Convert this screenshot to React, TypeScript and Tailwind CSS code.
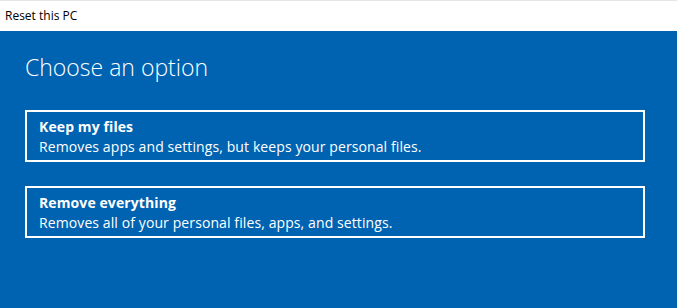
export default function App() {
  return (
    <div className="w-[677px] h-[308px] flex flex-col bg-[#0063b1]" style={{ fontFamily: '"Open Sans", "Noto Sans", sans-serif' }}>
      <div className="h-[31px] bg-white border-t border-[#e5e5e5] flex items-center pl-[5px] text-[12px] text-black">
        Reset this PC
      </div>
      <div className="pl-[25px] pr-[32px] pt-[21px]">
        <h1 className="text-[23px] font-light text-white leading-[30px]">Choose an option</h1>
        <div className="mt-[28px] flex flex-col gap-[24px]">
          <div className="border-2 border-white h-[52px] pl-[12px] pt-[5px] text-white text-[14px] leading-[20px] tracking-[0.1px]">
            <div className="font-bold">Keep my files</div>
            <div>Removes apps and settings, but keeps your personal files.</div>
          </div>
          <div className="border-2 border-white h-[52px] pl-[12px] pt-[5px] text-white text-[14px] leading-[20px] tracking-[0.1px]">
            <div className="font-bold">Remove everything</div>
            <div>Removes all of your personal files, apps, and settings.</div>
          </div>
        </div>
      </div>
    </div>
  );
}
